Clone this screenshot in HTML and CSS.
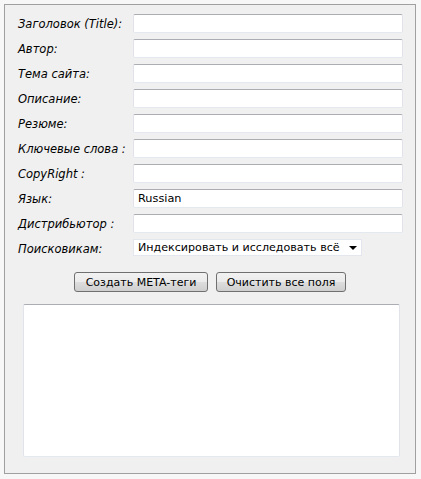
FILE: index.html
```html
<!DOCTYPE html>
<html lang="ru">
<head>
<meta charset="utf-8">
<title>META</title>
<link rel="stylesheet" href="styles.css">
</head>
<body>
<div class="box">
  <form class="form">
    <label class="lbl">Заголовок (Title):</label><input class="field" type="text">
    <label class="lbl">Автор:</label><input class="field" type="text">
    <label class="lbl">Тема сайта:</label><input class="field" type="text">
    <label class="lbl">Описание:</label><input class="field" type="text">
    <label class="lbl">Резюме:</label><input class="field" type="text">
    <label class="lbl">Ключевые слова :</label><input class="field" type="text">
    <label class="lbl">CopyRight :</label><input class="field" type="text">
    <label class="lbl">Язык:</label><input class="field" type="text" value="Russian">
    <label class="lbl">Дистрибьютор :</label><input class="field" type="text">
    <label class="lbl">Поисковикам:</label>
    <span class="selwrap"><select class="sel"><option>Индексировать и исследовать всё</option></select></span>
  </form>
  <div class="buttons">
    <button class="btn btn1" type="button">Создать META-теги</button>
    <button class="btn btn2" type="button">Очистить все поля</button>
  </div>
  <textarea class="out"></textarea>
</div>
</body>
</html>
```
FILE: styles.css
```css
html, body { margin: 0; padding: 0; background: #f7f7f7; }
body { padding: 4px; font-family: "DejaVu Sans", Verdana, sans-serif; font-size: 11px; color: #000; }
.box {
  width: 410px;
  height: 468px;
  border: 1px solid #a0a0a0;
  background: #f0f0f0;
  box-sizing: content-box;
  display: flex;
  flex-direction: column;
}
.form {
  display: grid;
  grid-template-columns: 115px 270px;
  grid-auto-rows: 19px;
  row-gap: 6px;
  margin: 9px 0 0 13px;
}
.lbl { font-style: italic; font-size: 11.5px; display: flex; align-items: center; white-space: nowrap; }
.field {
  box-sizing: border-box;
  width: 270px; height: 19px;
  margin: 0;
  border: 1px solid #e2e3ea;
  border-top-color: #abadb3;
  border-bottom-color: #e3e9ef;
  border-radius: 2px;
  background: #fff;
  font-family: "DejaVu Sans", Verdana, sans-serif;
  font-size: 11.3px;
  padding: 0 4px;
  color: #000;
  outline: none;
}
.selwrap { position: relative; width: 229px; height: 17px; }
.sel {
  -webkit-appearance: none; appearance: none;
  box-sizing: border-box;
  width: 229px; height: 17px;
  margin: 0;
  border: 1px solid #e3e6ec;
  background: #fff;
  font-family: "DejaVu Sans", Verdana, sans-serif;
  font-size: 11.1px;
  padding: 0 0 0 4px;
  color: #000;
  outline: none;
}
.selwrap::after {
  content: "";
  position: absolute;
  right: 5px; top: 7px;
  border-left: 4px solid transparent;
  border-right: 4px solid transparent;
  border-top: 4px solid #000;
}
.buttons { display: flex; justify-content: center; gap: 8px; margin-top: 14px; }
.btn {
  box-sizing: border-box;
  height: 20px;
  margin: 0;
  padding: 0;
  border: 1px solid #707070;
  border-radius: 3px;
  background: linear-gradient(#f2f2f2 0%, #ebebeb 50%, #dddddd 51%, #cfcfcf 100%);
  font-family: "DejaVu Sans", Verdana, sans-serif;
  font-size: 11px;
  color: #000;
}
.btn1 { width: 134px; }
.btn2 { width: 130px; }
.out {
  box-sizing: border-box;
  width: 377px; height: 153px;
  margin: 12px 0 0 18px;
  border: 1px solid #e2e3ea;
  border-top-color: #abadb3;
  border-bottom-color: #e3e9ef;
  border-radius: 2px;
  background: #fff;
  resize: none;
  outline: none;
}
```
